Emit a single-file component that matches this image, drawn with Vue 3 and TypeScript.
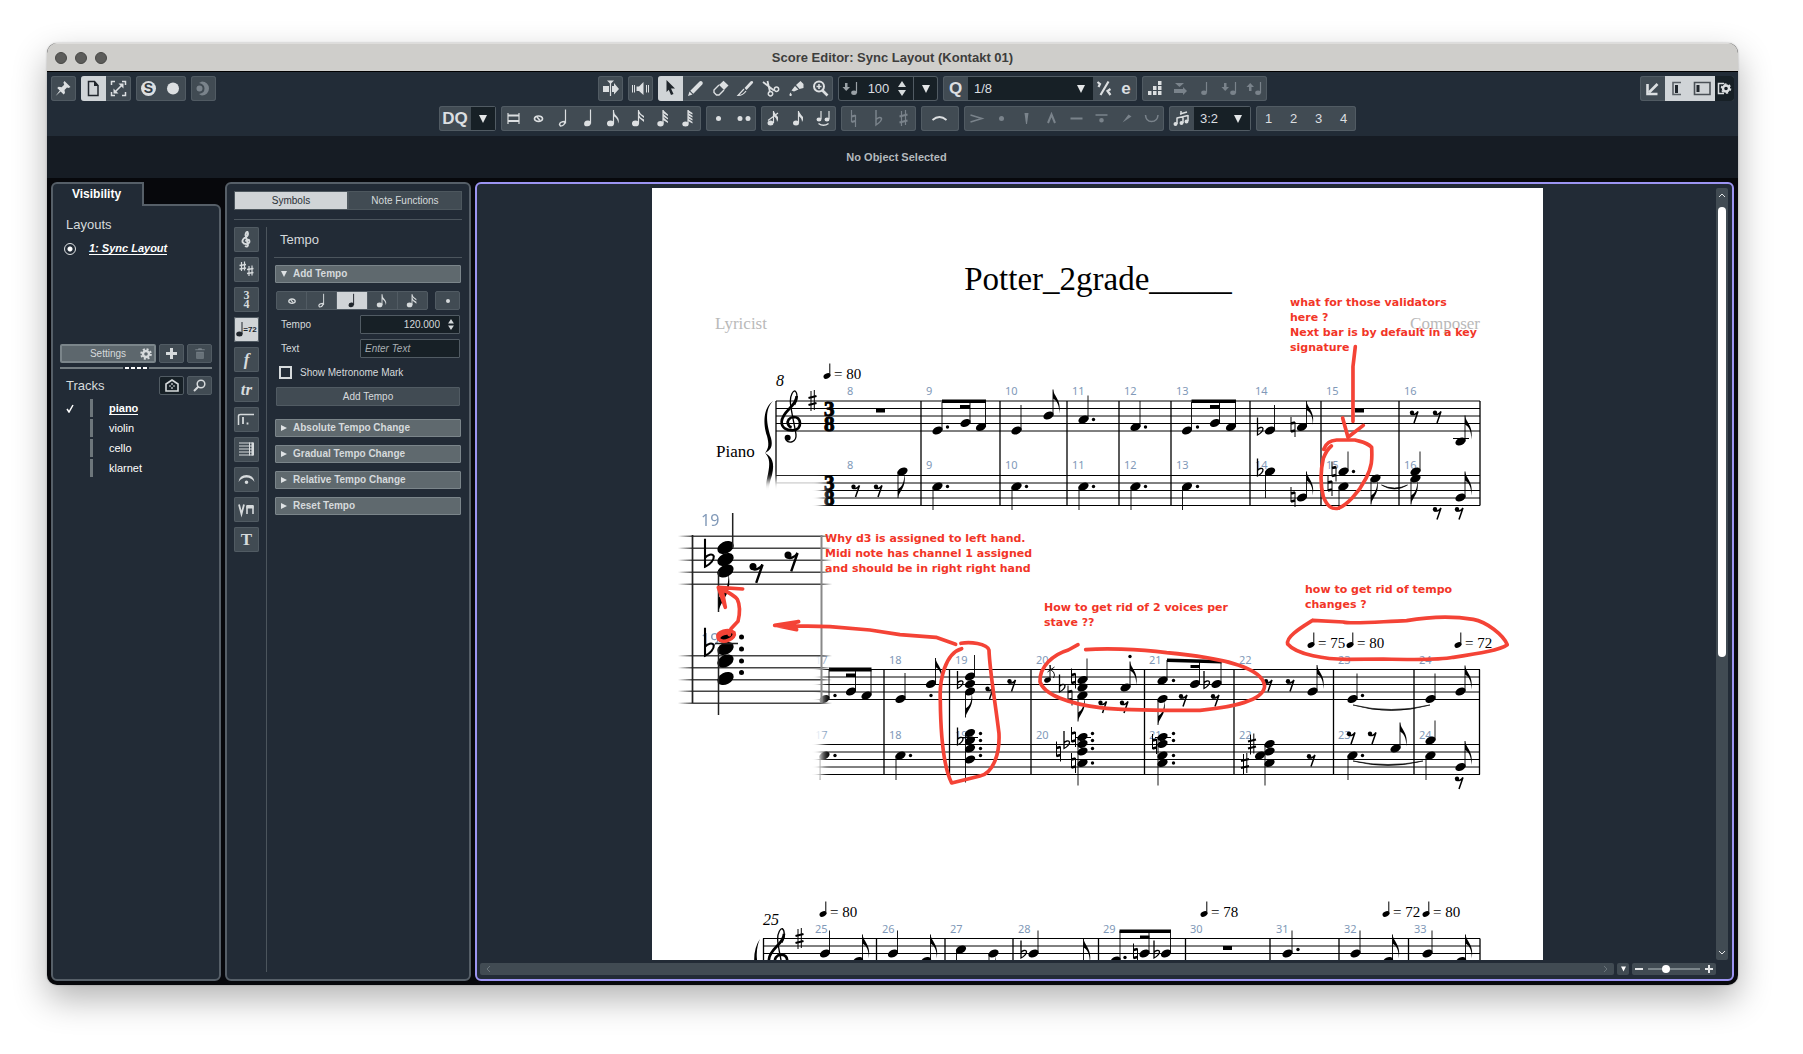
<script setup lang="ts">
import { h, ref } from 'vue'

type Shape = { d: string; w?: number; c?: string }

const dark = '#20262c'

const icons: Record<string, Shape[]> = {
  pin: [{ d: 'M13.5 5L19.5 11L17.5 12L16 11.5L13.5 14L14 17L12.6 18.4L9.6 15.6L4.6 20L8.8 14.6L6.2 12L7.6 10.8L10.6 11.2L13.2 8.8L12.4 6.6Z' }],
  page: [{ d: 'M7.5 5.5H13.5L17 9.5V19.5H7.5Z', w: 1.5, c: dark }, { d: 'M13 5L17.5 10H13Z', c: dark }],
  expand: [
    { d: 'M5.5 9V5.5H9M16 5.5H19.5V9M19.5 16V19.5H16M9 19.5H5.5V16', w: 1.5 },
    { d: 'M9 16L16 9', w: 1.6 },
    { d: 'M12.5 7.5H17.5V12.5ZM7.5 12.5V17.5H12.5Z' },
  ],
  record: [{ d: 'M12 6.5a6 6 0 1 1 0 12a6 6 0 1 1 0-12' }],
  moon: [
    { d: 'M11 5.5a7 7 0 1 1 0 14Q9.500 19 8 18Q13.500 17 13.500 12.500Q13.500 8 8 7Q9.500 6 11 5.500' },
    { d: 'M8.500 9.500a3 3 0 1 1 0 6a3 3 0 1 1 0-6' },
  ],
  autoscroll: [{ d: 'M5 10H11V16H5ZM14 10H16V7L21 13L16 18.5V16H14Z' }, { d: 'M12.5 6V20', w: 1.2 }, { d: 'M9 4.500H16L12.500 8Z' }],
  speaker: [{ d: 'M8.5 10.500H11L15.500 6V19L11 15H8.500Z' }, { d: 'M4.500 9V16.500M6.500 9V16.500M18.500 9V16.500M20.500 9V16.500', w: 1 }],
  arrow: [{ d: 'M8.500 4L17 12.500H13L15.500 18L13 19L10.800 13.800L8.500 16Z', c: dark }],
  pencil: [{ d: 'M5 20L6.500 15.500L9.500 18.500ZM7.300 14.700L16.500 5.500Q18 4.500 19.300 5.800Q20.400 7 19.300 8.500L10.300 17.700Z' }],
  eraser: [{ d: 'M11.500 8.500L15.500 4.800L20.500 9.500L16.500 13.500Z' }, { d: 'M11 9L6 14V16.500L8.500 19H11L16 14', w: 1.400 }, { d: 'M11.500 8.500L16.500 13.500', w: 1.200 }],
  knife: [{ d: 'M11.500 12L17.500 5.500Q18.800 4.500 20 5.500Q20.500 6.500 19.500 7.500L13.500 14Z' }, { d: 'M11 13L5 19.500Q10 19.500 13 15', w: 1.200 }],
  scissors: [
    { d: 'M5 6L16 14.500M9.500 5L12 16', w: 1.800 },
    { d: 'M18.500 11a2.200 2.200 0 1 1 0 4.400a2.200 2.200 0 1 1 0-4.400M12.500 15.500a2.200 2.200 0 1 1 0 4.400a2.200 2.200 0 1 1 0-4.400', w: 1.500 },
  ],
  glue: [{ d: 'M13 9L17.500 5L20.500 8V12L16.500 13ZM8.500 14.500L12 10L15.500 13.500L11 15.500ZM7.500 16.500L9 19Q8 20.800 6.500 19.500Q6 18.500 7.500 16.500' }],
  zoom: [{ d: 'M11 5.500a5 5 0 1 1 0 10a5 5 0 1 1 0-10', w: 2 }, { d: 'M14.500 14.500L19.500 19.500', w: 2.600 }, { d: 'M8.500 10.500H13.500M11 8V13', w: 1.600 }],
  iq: [{ d: 'M5.500 6L8 8L6.500 11M16.500 5.500L8.500 19M18.500 13L15.500 15L18.500 19', w: 2.200 }],
  steps: [{ d: 'M6 15H9.500V19H6ZM11 15H14.500V19H11ZM16 15H19.500V19H16ZM11 10H14.500V14H11ZM16 10H19.500V14H16ZM16 5H19.500V9H16Z' }],
  midiIn: [{ d: 'M8 7H17L12.500 11ZM7 13H16V11L20 15L16 19V17H7Z' }],
  smallNote: [{ d: 'M14.500 6V16.500', w: 1.200 }, { d: 'M12 14.500a2.800 2.200 0 1 1 0 4.400a2.800 2.200 0 1 1 0-4.400' }],
  noteDown: [{ d: 'M7 7H9.500V11H12L8.200 15L4.500 11H7Z' }, { d: 'M18.500 6V17', w: 1.200 }, { d: 'M16 14.500a2.800 2.200 0 1 1 0 4.400a2.800 2.200 0 1 1 0-4.400' }],
  noteUp: [{ d: 'M7 15H9.500V11H12L8.200 7L4.500 11H7Z' }, { d: 'M18.500 6V17', w: 1.200 }, { d: 'M16 14.500a2.800 2.200 0 1 1 0 4.400a2.800 2.200 0 1 1 0-4.400' }],
  toLower: [{ d: 'M7.500 8V18H17.500', w: 2.600 }, { d: 'M9 16.500L17.500 8', w: 2.600 }],
  zoneL: [{ d: 'M16 6.500H8V18.500H16', w: 1.600, c: '#5a6066' }, { d: 'M10 9H13V17H10Z', c: dark }],
  zoneLR: [{ d: 'M4.500 6.500H20V18.500H4.500Z', w: 1.600, c: '#4a5056' }, { d: 'M6.500 9H9.500V16H6.500Z', c: dark }],
  breve: [{ d: 'M7 7V18M18 7V18', w: 1.200 }, { d: 'M7 9.500H18M7 15H18', w: 2 }],
  whole: [{ d: 'M12.500 10a4 2.700 0 1 1 0 5.400a4 2.700 0 1 1 0-5.400', w: 1.700 }, { d: 'M11 11L14 14.500', w: 1.600 }],
  half: [{ d: 'M14.500 3.500V17.500', w: 1.200 }, { d: 'M8.500 18.500Q9 15.500 14 15.500Q13.500 20 9.500 20Z', w: 1.400 }],
  quarter: [{ d: 'M14.500 3.500V17.500', w: 1.200 }, { d: 'M11.500 14.500a3.400 2.800 -20 1 1 0 5.800a3.400 2.800 -20 1 1 0-5.800' }],
  eighth: [{ d: 'M12.500 4V17.500', w: 1.200 }, { d: 'M9.500 14.500a3.400 2.800 0 1 1 0 5.800a3.400 2.800 0 1 1 0-5.800M12.500 4Q13 8 16 10.500Q19 14 17 17.500Q17.500 13 12.500 10Z' }],
  sixteenth: [{ d: 'M12.500 4V17.500', w: 1.200 }, { d: 'M9.500 14.500a3.400 2.800 0 1 1 0 5.800a3.400 2.800 0 1 1 0-5.800M12.500 4Q14 8 18 10V12L12.500 7.500ZM12.500 8Q14 12 18 13.500V16L12.500 11.500Z' }],
  thirtysecond: [{ d: 'M12 4V17.500', w: 1.200 }, { d: 'M9.500 15a3.200 2.700 0 1 1 0 5.400a3.200 2.700 0 1 1 0-5.400M12 4L17 8.500V10L12 7ZM12 7.500L17 12V13.500L12 10.500ZM12 11L17 15.500V17L12 14Z' }],
  sixtyfourth: [{ d: 'M12 4V17.500', w: 1.200 }, { d: 'M9.500 15.500a3.200 2.500 0 1 1 0 5a3.200 2.500 0 1 1 0-5M12 4L16.500 7V8.500L12 6.500ZM12 6.800L16.500 10V11.500L12 9.300ZM12 9.800L16.500 13V14.500L12 12.200ZM12 12.600L16.500 16V17.500L12 15Z' }],
  dot: [{ d: 'M12.500 10a2.500 2.500 0 1 1 0 5a2.500 2.500 0 1 1 0-5' }],
  dots: [{ d: 'M9 10a2.500 2.500 0 1 1 0 5a2.500 2.500 0 1 1 0-5M17 10a2.500 2.500 0 1 1 0 5a2.500 2.500 0 1 1 0-5' }],
  acciaccatura: [{ d: 'M12.500 5V17M7 14.500L17 7', w: 1.200 }, { d: 'M9.500 14.500a3 2.500 0 1 1 0 5a3 2.500 0 1 1 0-5M12.500 5Q15 9 17 11Q17.500 14 16 16Q16 12 12.500 10Z' }],
  grace: [{ d: 'M12.500 5V17', w: 1.200 }, { d: 'M10 14.500a3 2.500 0 1 1 0 5a3 2.500 0 1 1 0-5M12.500 5Q15 9 17 11Q17.500 14 16 16Q16 12 12.500 10Z' }],
  tie: [{ d: 'M10 5V13M18 5V13', w: 1.200 }, { d: 'M8 11.500a2.500 2 0 1 1 0 4a2.500 2 0 1 1 0-4M16 11.500a2.500 2 0 1 1 0 4a2.500 2 0 1 1 0-4' }, { d: 'M7.500 17.500Q12.500 21 17.500 17.500', w: 1.500 }],
  natural: [{ d: 'M10.500 4V16M14.500 9V21', w: 1.200 }, { d: 'M10.500 10.500L14.500 9.500M10.500 16L14.500 15', w: 2.200 }],
  flat: [{ d: 'M10 4V19Q16 15 15.500 12.500Q14 10 10 13.500', w: 1.500 }],
  sharp: [{ d: 'M10.500 5V20M14.500 4V19', w: 1.200 }, { d: 'M8.500 10.500L16.500 8.500M8.500 16.500L16.500 14.500', w: 2 }],
  slur: [{ d: 'M11.500 14Q18.500 8 25.500 14', w: 1.800 }],
  accent: [{ d: 'M6.500 9L18 12.500L6.500 16', w: 1.500 }],
  wedge: [{ d: 'M10.500 7H14.500L13 18H12Z' }],
  marcato: [{ d: 'M9 17L12.500 8.500L16 17', w: 2 }],
  tenuto: [{ d: 'M6.500 12.500H18.500', w: 2 }],
  tenutoDot: [{ d: 'M6.500 9H18.500', w: 1.600 }, { d: 'M12.500 12a2.300 2.300 0 1 1 0 4.600a2.300 2.300 0 1 1 0-4.600' }],
  stress: [{ d: 'M8.500 16.500L14.500 8.500L17.500 10.500Z' }],
  unstress: [{ d: 'M6.500 9Q7 15.500 12.500 15.500Q18.500 15.500 19 9', w: 1.500 }],
  tuplet: [{ d: 'M8 11.500V18M14 10V17M19 9V15M8 12L19 9.500M11 8L18 6M12 5V9', w: 1.500 }, { d: 'M6.500 16a2 2 0 1 1 0 4a2 2 0 1 1 0-4M12.500 15a2 2 0 1 1 0 4a2 2 0 1 1 0-4M17.500 13.500a2 2 0 1 1 0 4a2 2 0 1 1 0-4' }],
  clef: [{ d: 'M11 19Q13.500 20.500 14 18L11.500 8Q12 4.500 13.500 5Q15 8 12 10Q8 12 8.500 15Q10 17.500 13.500 17Q16.500 15.500 15 13Q12.500 12 11.500 14.500', w: 1.900 }],
  keysig: [{ d: 'M7.500 5V14M10.500 4.500V13.500M15 9V19M18 8.500V18.500', w: 1.200 }, { d: 'M5.500 8.500L12 7.500M5.500 12L12 11M13 12.500L19.500 11.500M13 16.500L19.500 15.500', w: 1.600 }],
  bracket: [{ d: 'M4.500 18V9Q4.500 7.500 6.500 7.500H20', w: 1.500 }, { d: 'M9 10V17M13.500 15.500V17.500', w: 1.800 }],
  bars: [{ d: 'M5 6H19M5 9H19M5 12H19M5 15H19M5 18H19', w: 1 }, { d: 'M15.500 5.500V18.500', w: 1 }, { d: 'M17.500 5.500H20V18.500H17.500Z' }],
  fermata: [{ d: 'M4.500 15Q5.500 8 12.500 8Q19.500 8 20.500 15Q17.500 10.500 12.500 10.500Q7.500 10.500 4.500 15M12.500 13.500a1.800 1.800 0 1 1 0 3.600a1.800 1.800 0 1 1 0-3.600' }],
  bowing: [{ d: 'M5 7.500L7.500 17L10 7.500', w: 1.800 }, { d: 'M13 17V9.500H19V17', w: 1.600 }, { d: 'M12.500 8H19.500V11.500H12.500Z' }],
}

const Icon = (props: { name: string }) =>
  h(
    'svg',
    { class: 'ic', viewBox: props.name === 'slur' ? '0 0 38 25' : '0 0 25 25', width: props.name === 'slur' ? 38 : 25, height: 25, 'aria-hidden': 'true' },
    icons[props.name].map((s) =>
      h('path', {
        d: s.d,
        fill: s.w ? 'none' : s.c ?? 'currentColor',
        stroke: s.w ? s.c ?? 'currentColor' : 'none',
        'stroke-width': s.w,
      }),
    ),
  )
Icon.props = ['name']

const tools = ['arrow', 'pencil', 'eraser', 'knife', 'scissors', 'glue', 'zoom']
const durations = ['breve', 'whole', 'half', 'quarter', 'eighth', 'sixteenth', 'thirtysecond', 'sixtyfourth']
const articulations = ['accent', 'dot', 'wedge', 'marcato', 'tenuto', 'tenutoDot', 'stress', 'unstress']
const tempoBeats = ['whole', 'half', 'quarter', 'eighth', 'sixteenth']
const tracks = ['piano', 'violin', 'cello', 'klarnet']
const sections = ['Absolute Tempo Change', 'Gradual Tempo Change', 'Relative Tempo Change', 'Reset Tempo']

const insertVelocity = ref('100')
const tempo = ref('120.000')
const tempoText = ref('')
const metronome = ref(false)
const zoomLevel = ref(32)

/* ---- engraved score, in page coordinates ---- */
const five = (top: number) => [0, 7.5, 15, 22.5, 30].map((o) => top + o)

const systems = [
  { left: 776, lines: [...five(401), ...five(475.5)], bottom: 505.5, top: 401, bars: [776, 921, 1000, 1067, 1119, 1171, 1250, 1321, 1399, 1480] },
  { left: 812, lines: [...five(669.5), ...five(744.5)], bottom: 774.5, top: 669.5, bars: [884, 949.5, 1031, 1144.5, 1234, 1333.5, 1414, 1479.5] },
  { left: 763, lines: five(938.5), bottom: 970, top: 938.5, bars: [763.5, 876.5, 945, 1013, 1098.5, 1185.5, 1270, 1339, 1408.5, 1480] },
]

/* x, y of the head, then the y where the stem ends; a fourth value draws a flag */
type Note = [number, number, number?, number?]
const notes: Note[] = [
  [937.5, 430.5, 402], [965.5, 423, 402], [981, 427, 402], [1016.5, 430.5, 405], [1048.5, 415.5, 389.5, 1],
  [1083.5, 419.5, 395.5], [1135.5, 427, 401], [1187, 430.5, 402], [1215, 423, 402], [1231, 427, 402],
  [1270, 430.5, 405], [1302, 427, 401, 1], [1460.5, 441.5, 415.5, 1],
  [902.5, 471.5, 498, 1], [937.5, 486.5, 510], [1016.5, 486.5, 510], [1083.5, 486.5, 510], [1135.5, 486.5, 510], [1187, 486.5, 510],
  [1270, 471.5, 498], [1302, 497.5, 471.5, 1], [1343.5, 471.5, 451.5], [1343.5, 486.5, 510], [1375.5, 478.5, 504.5, 1],
  [1415.5, 471.5, 451.5], [1415.5, 478.5, 504.5, 1], [1460.5, 497.5, 471.5, 1],
  [824.5, 699, 669], [851, 691.5, 669], [866.5, 695.5, 669], [900.5, 699, 673], [931, 684, 658, 1],
  [970, 676.5, 655], [970, 684], [970, 691.5, 717.5, 1],
  [1082.5, 680, 658.5], [1082.5, 687.5], [1082.5, 695.5, 721.5, 1], [1125.5, 687.5, 661.5, 1],
  [1162.5, 680.5, 660], [1195, 684, 661], [1216.5, 684, 662], [1162.5, 699, 725, 1],
  [1312.5, 691.5, 665, 1], [1352.5, 699, 673.5], [1430.5, 699, 673.5], [1460.5, 691.5, 665.5, 1],
  [824.5, 755.5, 780], [900.5, 755.5, 780],
  [970, 733, 782.5], [970, 740.5], [970, 748.5], [970, 759.5],
  [1082.5, 737, 785.5], [1082.5, 744], [1082.5, 751.5], [1082.5, 763],
  [1162.5, 737, 785.5], [1162.5, 744], [1162.5, 755.5], [1162.5, 763],
  [1269.5, 744, 785.5], [1269.5, 751.5], [1260, 755.5], [1269.5, 763],
  [1395.5, 748.5, 722.5, 1], [1352.5, 755.5, 780], [1430.5, 740.5, 720.5], [1430.5, 755.5, 780], [1460.5, 767, 741, 1],
  [825, 953.5, 930.5], [858, 961, 934.5, 1], [893, 953.5, 930.5], [926, 961, 934.5, 1], [961, 949.5, 976], [993.5, 953.5, 980, 1],
  [1033.5, 953.5, 930.5], [1079, 964, 938.5, 1], [1115.5, 960.5, 931], [1144.5, 953.5, 931], [1166, 953.5, 931],
  [1287.5, 953.5, 930.5], [1355.5, 953.5, 930.5], [1388, 961, 934.5, 1], [1427.5, 953.5, 930.5], [1461, 961, 934.5, 1],
]
const stemX = (n: Note) => (n[2]! < n[1] ? n[0] + 4.5 : n[0] - 4.5)
const stems = notes.filter((n) => n[2] !== undefined)
const flags = notes.filter((n) => n[3])

const restMarks = [
  [1414.5, 416.5], [1437.5, 416.5], [856, 490.5], [878.5, 490.5], [1437.5, 513], [1459.5, 513],
  [990, 692.5], [1012, 685], [1103, 706.5], [1124.5, 706.5], [1183.5, 700], [1215.5, 700], [1268.5, 685], [1290.5, 685],
  [1311.5, 760], [1351.5, 737.5], [1372.5, 737.5], [1459.5, 782.5],
]
const barRests = [[876, 408.5], [1355, 408.5], [1223, 946]]
const flats = [[1260, 430.5], [1260, 471.5], [960, 684], [1062, 687.5], [1206.5, 684], [960, 740.5], [1066.5, 744], [1023.5, 953.5], [1156.5, 953.5]]
const naturals = [[1293, 427], [1293, 497], [1334, 471.5], [1330, 486], [1073.5, 678.5], [1070, 695.5], [1073.5, 737], [1058.5, 751.5], [1073.5, 763], [1154.5, 744], [1135.5, 953.5]]
const sharps = [[812.5, 400.5], [799.5, 938.5], [1252, 744], [1245, 763.5]]
const dots = [
  [947.5, 427], [1093.5, 419.5], [1145.5, 427], [1197.5, 427], [947.5, 486.5], [1026.5, 486.5], [1093.5, 486.5], [1145.5, 486.5], [1197.5, 486.5],
  [1353.5, 471.5], [835, 695.5], [931, 695.5], [835, 755.5], [910.5, 755.5], [980.5, 733.5], [980.5, 740.5], [980.5, 748.5], [980.5, 755.5],
  [1130, 656.5], [1173.5, 680.5], [1362.5, 695.5], [1092.5, 733.5], [1092.5, 740.5], [1092.5, 748.5], [1092.5, 763],
  [1173.5, 733.5], [1173.5, 740.5], [1173.5, 755.5], [1173.5, 763], [1362.5, 755.5], [1125, 957.5], [1298, 949.5],
]
const beams = [
  'M942 399.500H986V403H942ZM960 405H970V408.500H960Z',
  'M1191.500 399.500H1236V403H1191.500ZM1210 405H1220V408.500H1210Z',
  'M829 667.500H871.500V671.500H829ZM846 673.500H856V677H846Z',
  'M1167 658.500L1221.500 660V663.500L1167 662ZM1190.500 665H1200V668H1190.500Z',
  'M1119.500 929.500H1171V933H1119.500ZM1140 935.500H1149.500V939H1140Z',
].join('')
const ties = 'M1381.500 485Q1394.500 491 1407.500 485Q1394.500 493 1381.500 485M1353 705Q1391 716 1430 705Q1391 714 1353 705M1353 761Q1388 768 1423 761Q1388 770 1353 761'

const barNumbers: [string, number, number][] = [
  ...([['8', 847], ['9', 926], ['10', 1005], ['11', 1072], ['12', 1124], ['13', 1176], ['14', 1255], ['15', 1326], ['16', 1404]] as [string, number][]).flatMap(
    ([t, x]) => [[t, x, 395], [t, x, 469]] as [string, number, number][],
  ),
  ...([['17', 815], ['18', 889], ['19', 955], ['20', 1036], ['21', 1149], ['22', 1239], ['23', 1338], ['24', 1419]] as [string, number][]).flatMap(
    ([t, x]) => [[t, x, 664], [t, x, 739]] as [string, number, number][],
  ),
  ['25', 815, 933], ['26', 882, 933], ['27', 950, 933], ['28', 1018, 933], ['29', 1103, 933],
  ['30', 1190, 933], ['31', 1276, 933], ['32', 1344, 933], ['33', 1414, 933],
]
const tempoMarks: [string, number, number][] = [
  ['80', 827, 379], ['75', 1311, 648], ['80', 1350, 648], ['72', 1458, 648],
  ['80', 823, 917], ['78', 1204, 917], ['72', 1386, 917], ['80', 1426, 917],
]

const remarks: { x: number; y: number; lines: string[] }[] = [
  { x: 1290, y: 306, lines: ['what for those validators', 'here ?', 'Next bar is by default in a key', 'signature'] },
  { x: 825, y: 542, lines: ['Why d3 is assigned to left hand.', 'Midi note has channel 1 assigned', 'and should be in right right hand'] },
  { x: 1044, y: 611, lines: ['How to get rid of 2 voices per', 'stave ??'] },
  { x: 1305, y: 593, lines: ['how to get rid of tempo', 'changes ?'] },
]
</script>

<template>
  <div class="desktop">
    <main class="window">
      <header class="titlebar">
        <div class="lights"><i></i><i></i><i></i></div>
        <h1>Score Editor: Sync Layout (Kontakt 01)</h1>
      </header>

      <div class="toolbar">
        <div class="row spread">
          <div class="cluster">
            <div class="grp"><button aria-label="Pin"><Icon name="pin" /></button></div>
            <div class="grp">
              <button class="on" aria-label="Page mode"><Icon name="page" /></button>
              <button aria-label="Fit"><Icon name="expand" /></button>
            </div>
            <div class="grp">
              <button aria-label="Solo editor"><span class="solo">S</span></button>
              <button aria-label="Record in editor"><Icon name="record" /></button>
            </div>
            <div class="grp off"><button aria-label="Retrospective record"><Icon name="moon" /></button></div>
          </div>
          <div class="cluster mid">
            <div class="grp"><button aria-label="Autoscroll"><Icon name="autoscroll" /></button></div>
            <div class="grp"><button aria-label="Acoustic feedback"><Icon name="speaker" /></button></div>
            <div class="grp">
              <button v-for="t in tools" :key="t" :class="{ on: t === 'arrow' }" :aria-label="t"><Icon :name="t" /></button>
            </div>
            <div class="grp well velocity">
              <span class="dim"><Icon name="noteDown" /></span>
              <input v-model="insertVelocity" aria-label="Insert velocity" />
              <svg class="spin" viewBox="0 0 8 15" width="8" height="15"><path d="M4 0L8 6H0ZM4 15L0 9H8Z" /></svg>
              <button class="split" aria-label="Velocity presets"><svg class="tri" viewBox="0 0 8 8"><path d="M0 0H8L4 8Z" /></svg></button>
            </div>
            <div class="grp">
              <button class="letter" aria-label="Quantize">Q</button>
              <label class="pick quant">
                <select aria-label="Quantize preset"><option>1/8</option></select>
                <svg class="tri" viewBox="0 0 8 8"><path d="M0 0H8L4 8Z" /></svg>
              </label>
              <button class="slim" aria-label="Iterative quantize"><Icon name="iq" /></button>
              <button class="slim letter" aria-label="Quantize panel">e</button>
            </div>
            <div class="grp">
              <button aria-label="Step input"><Icon name="steps" /></button>
              <button v-for="n in ['midiIn', 'smallNote', 'noteDown', 'noteUp']" :key="n" class="off" :aria-label="n"><Icon :name="n" /></button>
            </div>
          </div>
          <div class="grp">
            <button aria-label="Open in lower zone"><Icon name="toLower" /></button>
            <button class="on" aria-label="Left zone"><Icon name="zoneL" /></button>
            <button class="on" aria-label="Info zones"><Icon name="zoneLR" /></button>
            <button class="setup" aria-label="Set up window layout">
              <svg viewBox="0 0 19 25" width="19" height="25">
                <path d="M9 7.500H3.500V17.500H9" fill="none" stroke="currentColor" stroke-width="1.500" />
                <circle cx="11" cy="12.500" r="3" fill="none" stroke="currentColor" stroke-width="2.400" />
                <circle cx="11" cy="12.500" r="4.500" fill="none" stroke="currentColor" stroke-width="1.600" stroke-dasharray="2.300 2.400" />
              </svg>
            </button>
          </div>
        </div>

        <div class="row second">
          <div class="grp">
            <button class="letter dq" aria-label="Display quantize">DQ</button>
            <button class="drop" aria-label="Display quantize options"><svg class="tri" viewBox="0 0 8 8"><path d="M0 0H8L4 8Z" /></svg></button>
          </div>
          <div class="grp"><button v-for="d in durations" :key="d" :aria-label="d"><Icon :name="d" /></button></div>
          <div class="grp"><button v-for="d in ['dot', 'dots']" :key="d" :aria-label="d"><Icon :name="d" /></button></div>
          <div class="grp"><button v-for="d in ['acciaccatura', 'grace', 'tie']" :key="d" :aria-label="d"><Icon :name="d" /></button></div>
          <div class="grp off"><button v-for="d in ['natural', 'flat', 'sharp']" :key="d" :aria-label="d"><Icon :name="d" /></button></div>
          <div class="grp"><button class="wide" aria-label="Slur"><Icon name="slur" /></button></div>
          <div class="grp off"><button v-for="d in articulations" :key="d" :aria-label="d"><Icon :name="d" /></button></div>
          <div class="grp">
            <button aria-label="Tuplet"><Icon name="tuplet" /></button>
            <label class="pick ratio">
              <select aria-label="Tuplet ratio"><option>3:2</option></select>
              <svg class="tri" viewBox="0 0 8 8"><path d="M0 0H8L4 8Z" /></svg>
            </label>
          </div>
          <div class="grp"><button v-for="v in 4" :key="v" class="num">{{ v }}</button></div>
        </div>
      </div>

      <div class="info">No Object Selected</div>

      <div class="zones">
        <aside class="visibility">
          <div class="tab">Visibility</div>
          <div class="vbody">
            <section class="layouts">
              <h2>Layouts</h2>
              <label class="layout"><input type="radio" name="layout" checked /><span>1: Sync Layout</span></label>
            </section>
            <div class="vrow">
              <button class="pb settings">
                <span>Settings</span>
                <svg viewBox="0 0 12 12" width="12" height="12">
                  <circle cx="6" cy="6" r="3" fill="none" stroke="currentColor" stroke-width="2.400" />
                  <circle cx="6" cy="6" r="4.800" fill="none" stroke="currentColor" stroke-width="2" stroke-dasharray="2 1.770" />
                </svg>
              </button>
              <button class="pb" aria-label="Add layout"><svg viewBox="0 0 11 11" width="11" height="11"><path d="M4 0H7V4H11V7H7V11H4V7H0V4H4Z" fill="currentColor" /></svg></button>
              <button class="pb faint" aria-label="Delete layout"><svg viewBox="0 0 10 11" width="10" height="11"><path d="M0 1H3V0H7V1H10V2.500H0ZM1 3.500H9V11H1ZM3 4.500V10M5 4.500V10M7 4.500V10" fill="currentColor" stroke="#414b53" stroke-width=".6" /></svg></button>
            </div>
            <div class="divider"><i></i></div>
            <div class="vrow heading">
              <h2>Tracks</h2>
              <button class="pb sunk" aria-label="Filter agents">
                <svg viewBox="0 0 14 13" width="14" height="13" fill="none" stroke="currentColor"><path d="M1 12V5L7 1L13 5V12Z" stroke-width="1.600" /><path d="M7 4V6M7 8V10M4 7H6M8 7H10" stroke-width="1.200" /></svg>
              </button>
              <button class="pb" aria-label="Find track">
                <svg viewBox="0 0 13 13" width="13" height="13" fill="none" stroke="currentColor"><circle cx="8" cy="5" r="3.800" stroke-width="1.500" /><path d="M5.500 7.500L1 12" stroke-width="2" /></svg>
              </button>
            </div>
            <ul class="tracks">
              <li v-for="t in tracks" :key="t" :class="{ current: t === 'piano' }">
                <svg class="tick" viewBox="0 0 8 9" width="8" height="9"><path v-if="t === 'piano'" d="M1 5L3 8L7 1" fill="none" stroke="#fff" stroke-width="1.500" /></svg>
                <i></i><span>{{ t }}</span>
              </li>
            </ul>
          </div>
        </aside>

        <aside class="symbols">
          <nav class="seg"><button class="on">Symbols</button><button>Note Functions</button></nav>
          <div class="body">
            <div class="cats">
              <button aria-label="Clefs"><Icon name="clef" /></button>
              <button aria-label="Key signatures"><Icon name="keysig" /></button>
              <button class="meter" aria-label="Time signatures"><b>3</b><b>4</b></button>
              <button class="on mark" aria-label="Tempo"><svg viewBox="0 0 7 15" width="7" height="15"><path d="M6 0V12" stroke="#20262c" /><ellipse cx="3.400" cy="12" rx="3.200" ry="2.500" fill="#20262c" /></svg><b>=72</b></button>
              <button class="glyph" aria-label="Dynamics"><em>f</em></button>
              <button class="glyph" aria-label="Ornaments"><em>tr</em></button>
              <button aria-label="Lines"><Icon name="bracket" /></button>
              <button aria-label="Bar lines"><Icon name="bars" /></button>
              <button aria-label="Holds"><Icon name="fermata" /></button>
              <button aria-label="Playing techniques"><Icon name="bowing" /></button>
              <button class="glyph" aria-label="Text">T</button>
            </div>
            <div class="editor">
              <h2>Tempo</h2>
              <button class="sec open"><svg viewBox="0 0 6 6"><path d="M0 0H6L3 6Z" /></svg>Add Tempo</button>
              <div class="form">
                <div class="beats">
                  <div class="beatset"><button v-for="b in tempoBeats" :key="b" :class="{ on: b === 'quarter' }" :aria-label="b"><Icon :name="b" /></button></div>
                  <div class="beatset single"><button aria-label="Dotted"><Icon name="dot" /></button></div>
                </div>
                <div class="field">
                  <label for="bpm">Tempo</label>
                  <div class="box"><input id="bpm" v-model="tempo" /><svg class="spin" viewBox="0 0 8 15" width="6" height="11"><path d="M4 0L8 6H0ZM4 15L0 9H8Z" /></svg></div>
                </div>
                <div class="field">
                  <label for="ttext">Text</label>
                  <div class="box"><input id="ttext" v-model="tempoText" class="left" placeholder="Enter Text" /></div>
                </div>
                <label class="check"><input v-model="metronome" type="checkbox" />Show Metronome Mark</label>
                <button class="add">Add Tempo</button>
              </div>
              <div class="more">
                <button v-for="s in sections" :key="s" class="sec"><svg viewBox="0 0 6 6"><path d="M0 0L6 3L0 6Z" /></svg>{{ s }}</button>
              </div>
            </div>
          </div>
        </aside>

        <section class="score">
          <div class="view">
            <svg class="sheet" viewBox="652 188 891 1260" width="891" height="1260">
              <defs>
                <ellipse id="head" rx="5.400" ry="3.700" transform="rotate(-27)" />
                <path id="flag" d="M0 0C1 7 9 11 6.200 24C6.500 16 4 11 0 9Z" />
                <g id="rest"><circle cx="-2.500" cy="-3.800" r="2.200" /><path d="M-3.500-2.500C-1-1 2-2.500 3.500-5L-.5 6.500" fill="none" stroke="#000" stroke-width="1.500" /></g>
                <path id="flat" d="M-2.500-13V4.500C1 3 3.200 0 3-2C2-4-1-3-2.500-1" fill="none" stroke="#000" stroke-width="1.300" />
                <g id="nat" fill="none" stroke="#000"><path d="M-2-10V5M2-5V10" stroke-width="1" /><path d="M-2-3.500L2-4.500M-2 4.500L2 3.500" stroke-width="2.400" /></g>
                <g id="sharp" fill="none" stroke="#000"><path d="M-1.500-9.500V10.500M1.800-10.500V9.500" stroke-width="1" /><path d="M-4-2.500L4-4.500M-4 4.500L4 2.500" stroke-width="2.200" /></g>
                <g id="gclef" fill="none" stroke="#000">
                  <path d="M408 600C418 612 440 606 438 584C436 566 421 505 421 484C421 464 430 452 435 453C443 458 443 480 434 495" stroke-width="4" />
                  <path d="M440 468C441 498 396 514 395 545C394 564 410 571 427 571C444 571 451 561 450 549C449 536 440 531 431 531C417 532 411 544 414 552C416 558 420 561 425 562" stroke-width="8" />
                  <circle cx="413" cy="593" r="9" fill="#000" stroke="none" />
                </g>
                <filter id="feather" x="-20%" y="-20%" width="140%" height="140%"><feGaussianBlur stdDeviation="4" /></filter>
                <filter id="soft"><feGaussianBlur stdDeviation="0.6" /></filter>
                <linearGradient id="fade" gradientUnits="userSpaceOnUse" x1="678" x2="832" y1="0" y2="0">
                  <stop offset="0" stop-color="#333" stop-opacity="0" /><stop offset=".1" stop-color="#444" />
                  <stop offset=".92" stop-color="#444" /><stop offset="1" stop-color="#444" stop-opacity="0" />
                </linearGradient>
              </defs>
              <rect x="652" y="188" width="891" height="1260" fill="#fff" />
              <text class="serif" x="1098" y="290" font-size="33" text-anchor="middle">Potter_2grade_____</text>
              <text class="serif ghost" x="715" y="329">Lyricist</text>
              <text class="serif ghost" x="1480" y="329" text-anchor="end">Composer</text>
              <text class="serif" x="716" y="457" font-size="17">Piano</text>
              <text class="serif" x="776" y="386" font-size="16" font-style="italic">8</text>
              <text class="serif" x="763" y="925" font-size="16" font-style="italic">25</text>

              <g v-for="s in systems" :key="s.top" stroke="#000">
                <path v-for="y in s.lines" :key="y" :d="`M${s.left} ${y}H1480`" stroke-width="1" />
                <path v-for="x in s.bars" :key="x" :d="`M${x} ${s.top}V${s.bottom}`" stroke-width="1.300" />
              </g>
              <path d="M773 401C764 410 767 425 771 438C773 446 771 450 765 453C772 457 775 462 772 475C767 490 768 498 773 505C764 496 765 486 768 474C770 464 770 458 765 453C769 448 769 444 767 436C763 424 763 408 773 401" />
              <path d="M760 939Q752 950 755 970H759Q754 952 760 939" />
              <use href="#gclef" transform="translate(650 240) scale(.3333)" />
              <use href="#gclef" transform="translate(637.300 777.700) scale(.3333)" />
              <g class="serif timesig"><text x="824" y="416">3</text><text x="824" y="431">8</text><text x="824" y="490">3</text><text x="824" y="505">8</text></g>

              <g class="barno"><text v-for="(b, i) in barNumbers" :key="i" :x="b[1]" :y="b[2]">{{ b[0] }}</text></g>
              <use v-for="(n, i) in notes" :key="'n' + i" href="#head" :transform="`translate(${n[0]} ${n[1]})`" />
              <path v-for="(n, i) in stems" :key="'s' + i" :d="`M${stemX(n)} ${n[1]}V${n[2]}`" stroke="#000" stroke-width=".9" />
              <use v-for="(n, i) in flags" :key="'f' + i" href="#flag" :transform="`translate(${stemX(n)} ${n[2]}) scale(1 ${n[2]! < n[1] ? 1 : -1})`" />
              <use v-for="(r, i) in restMarks" :key="'r' + i" href="#rest" :transform="`translate(${r[0]} ${r[1]})`" />
              <use v-for="(r, i) in flats" :key="'b' + i" href="#flat" :transform="`translate(${r[0]} ${r[1]})`" />
              <use v-for="(r, i) in naturals" :key="'a' + i" href="#nat" :transform="`translate(${r[0]} ${r[1]})`" />
              <use v-for="(r, i) in sharps" :key="'h' + i" href="#sharp" :transform="`translate(${r[0]} ${r[1]})`" />
              <circle v-for="(d, i) in dots" :key="'d' + i" :cx="d[0]" :cy="d[1]" r="1.700" />
              <rect v-for="(r, i) in barRests" :key="'w' + i" :x="r[0]" :y="r[1]" width="9" height="4" />
              <path :d="beams" />
              <path :d="ties" stroke="#000" stroke-width=".6" />
              <path d="M1453 438.500H1469M962 737.500H978M1075 737.500H1091M1155 737.500H1171" stroke="#000" />
              <g transform="translate(1047.500 680)"><use href="#head" transform="scale(.65)" /><path d="M2.500 0V-15Q3-9 6-8Q8-5 6-2M0-8L7-13" fill="none" stroke="#000" stroke-width=".9" /></g>
              <g v-for="(t, i) in tempoMarks" :key="'t' + i" :transform="`translate(${t[1]} ${t[2]})`">
                <use href="#head" transform="translate(0 -3) scale(.68)" />
                <path d="M2.800-3V-15.500" stroke="#000" />
                <text class="serif" x="7" y="0" font-size="15">= {{ t[0] }}</text>
              </g>

              <rect x="630" y="480" width="192" height="304" fill="#fff" filter="url(#feather)" />

              <g filter="url(#soft)">
                <g class="barno big"><text x="701" y="526">19</text><text x="701" y="645">19</text></g>
                <path v-for="y in [535.5, 547.500, 559.500, 571.500, 583.500, 655, 667, 679, 690.500, 702.500]" :key="y" :d="`M678 ${y}h154v1.400h-154z`" fill="url(#fade)" />
                <path d="M692.500 535V703" stroke="#222" stroke-width="1.700" />
                <path d="M821.500 535V703" stroke="#888" stroke-width="2" />
                <use v-for="y in [547.500, 559.500, 571, 636, 648.500, 661, 678.500]" :key="'i' + y" href="#head" :transform="`translate(725.500 ${y}) scale(1.600)`" />
                <path d="M732.700 548V513M718.500 571V612M718.500 648V715M715 643.500H738" stroke="#222" stroke-width="1.500" fill="none" />
                <use href="#flag" transform="translate(718.500 612) scale(1.600 -1.600)" />
                <use href="#flat" transform="translate(709 559.500) scale(1.600)" />
                <use href="#flat" transform="translate(709 648.500) scale(1.600)" />
                <use href="#rest" transform="translate(757 572.500) scale(1.600)" />
                <use href="#rest" transform="translate(792 561) scale(1.600)" />
                <circle v-for="y in [637, 649, 661, 672.500]" :key="'j' + y" cx="741.500" :cy="y" r="2.500" />
              </g>

              <g class="pen">
                <g transform="translate(1120 280) scale(.3333)">
                  <path d="M706 200L699 260V424M668 414L684 472L730 436" />
                  <path d="M611 508C618 488 632 481 650 480L705 480C725 486 740 486 755 502C757 540 756 560 738 595C715 640 680 675 655 685C635 688 622 680 610 650C600 610 602 570 610 535C618 515 625 505 634 498" />
                </g>
                <g transform="translate(650 500) scale(.3333)">
                  <path d="M374 376L540 380L660 390L750 404L858 412L917 433M446 365L374 376L440 389L390 378Z" />
                  <path d="M243 386L264 364C270 340 270 315 262 298C250 283 230 275 212 266M278 267L205 262L226 322L216 270" />
                  <path d="M204 412C200 395 235 385 252 398C260 415 220 432 206 418C202 402 240 392 238 404" />
                  <path d="M933 430C960 425 1010 430 1017 450C1020 520 1035 600 1047 700C1050 760 1030 820 990 828L905 849C880 800 872 700 871 600C868 540 885 460 935 446" />
                </g>
                <g transform="translate(1020 560) scale(.3333)">
                  <path d="M174 254L145 270C100 283 58 320 60 365C72 405 150 432 240 443C330 453 430 451 540 451C640 442 732 420 734 378C728 320 600 293 440 278C350 266 250 265 197 269" />
                  <path d="M878 181C840 205 798 230 803 252C830 285 920 298 980 298L1090 297C1200 300 1260 300 1300 292C1380 280 1440 270 1462 254C1450 225 1400 185 1360 178C1280 165 1200 175 1160 182C1080 185 990 193 970 186Q900 182 878 181" />
                </g>
              </g>
              <text v-for="(r, i) in remarks" :key="'m' + i" class="remark"><tspan v-for="(l, j) in r.lines" :key="j" :x="r.x" :y="r.y + j * 15">{{ l }}</tspan></text>
            </svg>
          </div>
          <div class="vbar">
            <svg viewBox="0 0 8 5" width="8" height="5"><path d="M1 4L4 1L7 4" /></svg>
            <div class="track"><i></i></div>
            <svg viewBox="0 0 8 5" width="8" height="5"><path d="M1 1L4 4L7 1" /></svg>
          </div>
          <div class="bottom">
            <div class="hbar">
              <svg viewBox="0 0 5 8" width="5" height="8"><path d="M4 1L1 4L4 7" /></svg>
              <svg viewBox="0 0 5 8" width="5" height="8"><path d="M1 1L4 4L1 7" /></svg>
            </div>
            <button class="zp" aria-label="Zoom presets"><svg viewBox="0 0 8 8" width="5" height="6"><path d="M0 0H8L4 8Z" fill="#fff" /></svg></button>
            <div class="zoomer">
              <svg viewBox="0 0 8 8" width="8" height="8"><path d="M0 4H8" stroke-width="2" /></svg>
              <input v-model="zoomLevel" type="range" aria-label="Zoom" />
              <svg viewBox="0 0 8 8" width="8" height="8"><path d="M0 4H8M4 0V8" stroke-width="2" /></svg>
            </div>
          </div>
        </section>
      </div>
    </main>
  </div>
</template>

<style>
body {
  margin: 0;
  background: #fff;
}
.ic {
  display: block;
  flex: none;
}
</style>

<style scoped>
* {
  box-sizing: border-box;
}
.desktop {
  height: 100vh;
  padding: 43px 65px 69px 47px;
  display: flex;
  overflow: hidden;
  font: 10px/12px 'Liberation Sans', Arial, sans-serif;
  color: #d6dadc;
}
button,
input,
select {
  font: inherit;
  color: inherit;
  background: none;
  border: 0;
  padding: 0;
  margin: 0;
  min-width: 0;
}
h1,
h2 {
  margin: 0;
  font-weight: 400;
}
.window {
  flex: 1;
  min-width: 0;
  display: flex;
  flex-direction: column;
  background: #07080c;
  border-radius: 10px;
  overflow: hidden;
  box-shadow: 0 14px 34px rgba(0, 0, 0, 0.3), 0 0 2px rgba(0, 0, 0, 0.3);
}
.titlebar {
  height: 29px;
  flex: none;
  display: flex;
  align-items: center;
  background: #cfcecb;
  border-bottom: 1px solid #000;
  border-top: 1px solid #dedddb;
}
.lights {
  display: flex;
  gap: 8px;
  width: 80px;
  padding-left: 8px;
}
.lights i {
  width: 12px;
  height: 12px;
  border-radius: 50%;
  background: #5c5c5a;
  border: 1px solid #484846;
}
.titlebar h1 {
  flex: 1;
  margin-right: 80px;
  text-align: center;
  font-size: 13px;
  line-height: 16px;
  font-weight: 700;
  color: #3d3d3c;
}
.toolbar {
  flex: none;
  background: #222c37;
  padding: 4px 4px 5px;
  display: flex;
  flex-direction: column;
  gap: 5px;
}
.row,
.cluster {
  display: flex;
  gap: 5px;
}
.spread {
  justify-content: space-between;
}
.mid {
  margin-left: 9px;
}
.second {
  justify-content: center;
  padding-left: 10px;
}
.grp {
  display: flex;
  height: 25px;
  background: #414b53;
  border-radius: 3px;
  overflow: hidden;
  box-shadow: inset 0 0 0 1px #515b63;
  color: #dcdfe1;
}
.grp button {
  width: 25px;
  height: 25px;
  display: flex;
  align-items: center;
  justify-content: center;
}
.grp .slim {
  width: 22px;
}
.grp .on {
  background: #d0d4d7;
}
.grp.off,
.grp .off {
  color: #7a838b;
}
.dim {
  color: #9aa1a6;
}
.solo {
  width: 15px;
  height: 15px;
  border-radius: 50%;
  background: #dcdfe1;
  color: #333c44;
  font-weight: 700;
  font-size: 14px;
  line-height: 15px;
}
.grp .letter {
  font-size: 17px;
  font-weight: 700;
}
.grp .dq {
  width: 32px;
}
.grp .drop {
  background: #172026;
  margin: 1px;
  width: 24px;
  height: 23px;
  margin-left: 0;
}
.tri {
  width: 8px;
  height: 8px;
  fill: #e4e6e8;
}
.spin {
  fill: #d6dadc;
}
.well {
  background: #172026;
  width: 100px;
  align-items: center;
}
.well input {
  width: 31px;
  font-size: 13px;
  text-align: center;
  margin-right: 4px;
}
.well .spin {
  margin: 0 7px 0 0;
}
.grp .split {
  border-left: 1px solid #515b63;
}
.pick {
  position: relative;
  background: #172026;
  margin: 1px 0;
  display: flex;
  align-items: center;
  padding: 0 8px 0 6px;
  font-size: 13px;
}
.pick select {
  appearance: none;
  flex: 1;
  height: 23px;
}
.quant {
  width: 125px;
}
.ratio {
  width: 56px;
  margin-right: 1px;
}
.grp .wide {
  width: 38px;
}
.grp .num {
  font-size: 13px;
}
.grp .setup {
  width: 19px;
  background: #172026;
}
.info {
  height: 42px;
  flex: none;
  background: #161c24;
  display: flex;
  align-items: center;
  justify-content: center;
  padding-left: 8px;
  font-size: 11px;
  font-weight: 700;
  color: #b4b9bd;
}
.zones {
  flex: 1;
  min-height: 0;
  display: flex;
  gap: 4px;
  padding: 4px;
}
.visibility {
  width: 170px;
  flex: none;
  display: flex;
  flex-direction: column;
}
.tab {
  width: 93px;
  height: 24px;
  margin-bottom: -2px;
  position: relative;
  border: 2px solid #565f68;
  border-bottom: 0;
  border-radius: 6px 0 0;
  background: #222b36;
  color: #fff;
  font-size: 12px;
  font-weight: 700;
  line-height: 20px;
  text-align: center;
  padding-right: 2px;
}
.vbody {
  flex: 1;
  border: 2px solid #565f68;
  border-radius: 0 6px 6px 6px;
  background: #222b36;
  padding: 10px 7px;
}
h2 {
  font-size: 13px;
  line-height: 18px;
}
.layouts {
  height: 128px;
  padding-left: 6px;
}
.layout {
  display: flex;
  align-items: center;
  margin: 8px 0 0 -2px;
  font-size: 11px;
  font-weight: 700;
  font-style: italic;
  color: #fff;
}
.layout span {
  border-bottom: 1px solid #fff;
  line-height: 12px;
}
.layout input {
  appearance: none;
  width: 12px;
  height: 12px;
  margin-right: 13px;
  border-radius: 50%;
  border: 1px solid #dfe2e4;
  background: radial-gradient(#fff 0 2px, transparent 3px);
}
.vrow {
  display: flex;
  gap: 3px;
}
.pb {
  width: 25px;
  height: 19px;
  display: flex;
  align-items: center;
  justify-content: center;
  background: #414b53;
  border: 1px solid #515b63;
  border-radius: 2px;
}
.settings {
  flex: 1;
  background: #5d676d;
  border: 2px solid #7b858a;
  padding: 0 2px;
}
.settings span {
  flex: 1;
  padding-left: 12px;
}
.faint {
  color: #7a838b;
}
.sunk {
  background: #172026;
}
.divider {
  margin: 4px 0 7px;
  height: 2px;
  background: #737c81;
}
.divider i {
  display: block;
  width: 26px;
  height: 2px;
  margin-left: 63px;
  background: repeating-linear-gradient(90deg, #222b36 0 2px, #fff 2px 6px);
}
.heading h2 {
  flex: 1;
  padding-left: 6px;
  line-height: 19px;
}
.tracks {
  list-style: none;
  margin: 4px 0 0;
  padding: 0 0 0 6px;
  font-size: 11px;
  color: #fff;
}
.tracks li {
  display: flex;
  height: 18px;
  margin-bottom: 2px;
  align-items: center;
}
.tracks i {
  width: 3px;
  height: 18px;
  margin: 0 16px;
  background: #6d767b;
}
.current span {
  font-weight: 700;
  border-bottom: 1px solid #fff;
}
.symbols {
  width: 246px;
  flex: none;
  display: flex;
  flex-direction: column;
  border: 2px solid #565f68;
  border-radius: 6px;
  background: #222b36;
  padding: 7px;
}
.seg {
  display: flex;
  margin-bottom: 9px;
}
.seg button {
  flex: 1;
  height: 19px;
  background: #414b53;
  border: 1px solid #4d575e;
}
.seg .on {
  background: #d0d4d7;
  color: #2a3036;
}
.body {
  flex: 1;
  display: flex;
  border-top: 1px solid #4c555d;
  padding-top: 7px;
}
.cats {
  width: 33px;
  border-right: 1px solid #4c555d;
  display: flex;
  flex-direction: column;
  gap: 5px;
  margin-right: 7px;
}
.cats button {
  width: 25px;
  height: 25px;
  display: flex;
  align-items: center;
  justify-content: center;
  background: #414b53;
  border-radius: 2px;
  box-shadow: inset 0 0 0 1px #515b63;
}
.cats .on {
  background: #d0d4d7;
  color: #20262c;
}
.cats .meter {
  flex-direction: column;
  font: 700 12px/9px 'Liberation Serif', serif;
}
.mark b {
  font-size: 8px;
}
.cats .glyph {
  font: 700 17px/20px 'Liberation Serif', serif;
}
.editor {
  flex: 1;
  min-width: 0;
}
.editor h2 {
  padding: 4px 0 8px 6px;
  border-bottom: 1px solid #4c555d;
}
.sec {
  width: calc(100% - 2px);
  height: 18px;
  display: flex;
  align-items: center;
  gap: 6px;
  padding-left: 5px;
  margin-left: 1px;
  background: #5f696e;
  border: 1px solid #7b858a;
  border-radius: 1px;
  font-weight: 700;
}
.sec svg {
  width: 6px;
  height: 6px;
  fill: #dfe2e4;
}
.open {
  margin-top: 7px;
}
.form {
  padding: 8px 2px 13px;
  display: flex;
  flex-direction: column;
  gap: 5px;
}
.beats {
  display: flex;
  gap: 7px;
}
.beatset {
  flex: 1;
  height: 19px;
  display: flex;
  background: #414b53;
  border: 1px solid #515b63;
  border-radius: 2px;
  overflow: hidden;
}
.single {
  flex: none;
  width: 25px;
}
.beatset button {
  flex: 1;
  display: flex;
  align-items: center;
  justify-content: center;
  border-left: 1px solid #515b63;
}
.beatset button:first-child {
  border-left: 0;
}
.beatset .on {
  background: #d0d4d7;
  color: #20262c;
}
.beatset .ic {
  width: 20px;
  height: 20px;
}
.field {
  display: flex;
  align-items: center;
  justify-content: space-between;
  padding-left: 5px;
}
.box {
  width: 100px;
  height: 19px;
  display: flex;
  align-items: center;
  background: #172026;
  border: 1px solid #515b63;
  border-radius: 1px;
  padding-right: 5px;
}
.box input {
  flex: 1;
  text-align: right;
  margin-right: 8px;
}
.box .left {
  text-align: left;
  padding-left: 4px;
}
.box input::placeholder {
  font-style: italic;
  color: #a9afb3;
}
.check {
  height: 19px;
  padding-left: 3px;
  display: flex;
  align-items: center;
  gap: 8px;
}
.check input {
  appearance: none;
  width: 13px;
  height: 13px;
  border: 2px solid #d6dadc;
}
.add {
  height: 19px;
  background: #414b53;
  border: 1px solid #515b63;
  border-radius: 1px;
}
.more {
  display: flex;
  flex-direction: column;
  gap: 8px;
}
.score {
  flex: 1;
  min-width: 0;
  border: 2px solid #9c94f2;
  border-radius: 6px;
  background: #222b36;
  padding: 4px 4px 4px 0;
  display: grid;
  grid-template-columns: 1fr 12px;
  grid-template-rows: 1fr 12px;
  row-gap: 3px;
}
.view {
  overflow: hidden;
  min-height: 0;
  display: flex;
  justify-content: center;
  align-items: flex-start;
  margin-right: -2px;
}
.sheet {
  flex: none;
}
.vbar {
  position: relative;
  background: #414b53;
  border-radius: 2px;
  display: flex;
  flex-direction: column;
  align-items: center;
  padding: 5px 0;
}
.track {
  flex: 1;
  width: 8px;
  padding: 9px 0 6px;
}
.track i {
  display: block;
  height: 61%;
  border-radius: 4px;
  background: #fff;
}
.vbar svg,
.hbar svg,
.zoomer svg {
  fill: none;
  stroke: #e4e6e8;
}
.bottom {
  grid-column: 1;
  display: flex;
  gap: 3px;
  padding-left: 3px;
}
.hbar {
  flex: 1;
  display: flex;
  justify-content: space-between;
  align-items: center;
  padding: 0 6px;
  background: #414b53;
  border-radius: 2px;
}
.hbar svg {
  stroke: #6a747b;
}
.zp {
  width: 12px;
  display: flex;
  align-items: center;
  justify-content: center;
  background: #414b53;
  border-radius: 2px;
}
.zoomer {
  width: 84px;
  display: flex;
  align-items: center;
  justify-content: space-between;
  padding: 0 3px;
  background: #414b53;
  border-radius: 2px;
}
.zoomer input {
  appearance: none;
  width: 52px;
  height: 2px;
  background: #7b858a;
}
.zoomer input::-webkit-slider-thumb {
  appearance: none;
  width: 8px;
  height: 8px;
  border-radius: 50%;
  background: #fff;
}
.serif {
  font-family: 'Liberation Serif', 'Times New Roman', serif;
}
.ghost {
  font-size: 17px;
  fill: #b9b9b9;
}
.timesig {
  font-size: 21px;
  font-weight: 700;
  stroke: #000;
  stroke-width: 1;
}
.barno {
  font: 11px 'Noto Sans', sans-serif;
  fill: #8199b8;
}
.big {
  font-size: 16px;
}
.pen {
  fill: none;
  stroke: #f44336;
  stroke-width: 11;
  stroke-linecap: round;
  stroke-linejoin: round;
}
.remark {
  font: 700 11px 'DejaVu Sans', Verdana, sans-serif;
  fill: #f23527;
}
</style>
